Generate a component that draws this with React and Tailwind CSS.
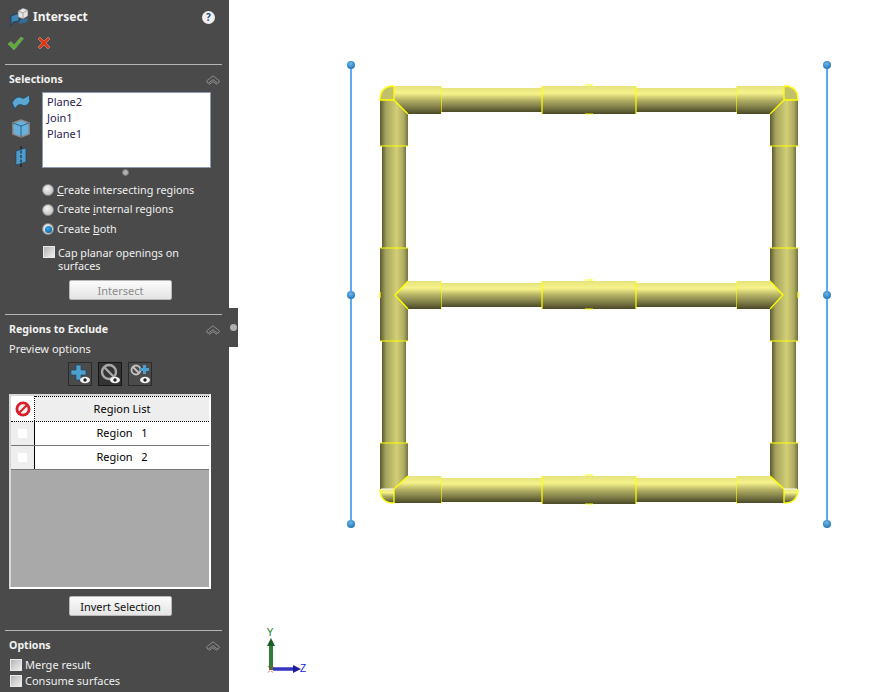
import React from 'react'

const font = { fontFamily: '"Noto Sans", sans-serif' }

function Collapse() {
    return (
        <svg width="14" height="10" viewBox="0 0 14 10" fill="none" stroke="#8e8e8e" strokeWidth="1">
            <path d="M0.5 6 L7 0.8 L13.5 6 L12 8.5 L7 4.6 L2 8.5 Z" />
            <path d="M3 9.5 L7 6.6 L11 9.5" />
        </svg>
    )
}

function SectionTitle({ children }) {
    return (
        <div className="flex items-center justify-between h-[16px] px-[9px] text-[10.6px] font-bold text-[#f2f2f2]">
            <span>{children}</span>
            <Collapse />
        </div>
    )
}

function Divider() {
    return <div className="ml-[5px] w-[217px] h-px bg-[#b5b5b5]"></div>
}

function Radio({ on, label }) {
    return (
        <div className="flex items-center h-[14px] text-[10.8px] text-[#efefef]">
            <span className="w-[12px] h-[12px] ml-[42px] mr-[3px] rounded-full border border-[#8a8a8a] bg-[radial-gradient(circle_at_40%_35%,#f4f4f4,#b4b4b4)] flex items-center justify-center">
                {on && <span className="w-[7px] h-[7px] rounded-full bg-[radial-gradient(circle_at_40%_35%,#35a8e8,#0a4f8c)]"></span>}
            </span>
            <span className="whitespace-pre">{label}</span>
        </div>
    )
}

function Check() {
    return <span className="block shrink-0 w-[12px] h-[12px] border border-[#e8e8e8] bg-gradient-to-br from-[#b5b5b5] to-[#efefef]"></span>
}

function Button({ children, disabled }) {
    return (
        <button type="button" className={`block w-[103px] h-[20px] ml-[69px] rounded-[2px] border border-[#b8b8b8] text-[11px] leading-none bg-gradient-to-b from-[#fbfbfb] to-[#e4e4e4] ${disabled ? 'text-[#8a8a8a]' : 'text-[#111]'}`}>
            {children}
        </button>
    )
}

function PreviewBtn({ active, children }) {
    return (
        <span className={`flex items-center justify-center w-[24px] h-[24px] border ${active ? 'bg-[#333] border-[#161616]' : 'bg-[#4b4b4b] border-[#2b2b2b]'}`}>
            <svg width="22" height="22" viewBox="0 0 22 22">{children}</svg>
        </span>
    )
}

function Eye() {
    return (
        <g>
            <ellipse cx="16" cy="17" rx="5" ry="3.2" fill="#f2f2f2" />
            <circle cx="16" cy="17" r="1.7" fill="#222" />
        </g>
    )
}

function RegionRow({ n }) {
    return (
        <div className="flex h-[24px] border-b border-[#777] bg-white">
            <span className="flex items-center justify-center w-[24px] bg-[#eeeeee] border-r border-black">
                <span className="w-[9px] h-[9px] bg-white"></span>
            </span>
            <span className="flex-1 text-center text-[11px] leading-[21px] text-black whitespace-pre">Region   {n}</span>
        </div>
    )
}

function Sidebar() {
    return (
        <div className="w-[229px] h-[692px] shrink-0 overflow-hidden bg-[#4a4a4a]">
            <div className="h-[64px]">
                <div className="flex items-center h-[33px] pl-[10px] pt-[1px]">
                    <svg width="20" height="20" viewBox="0 0 20 20">
                        <path d="M1 9 L9 6 L9 14 L3 15 L1 19 Z" fill="#3d86b8" stroke="#123a58" strokeWidth="0.8" />
                        <path d="M8 4 L13 1 L18 3 L18 9 L13 12 L8 10 Z" fill="#e6e6e6" stroke="#666" strokeWidth="0.7" />
                        <path d="M8 4 L13 6 L18 3 M13 6 L13 12" fill="none" stroke="#888" strokeWidth="0.7" />
                        <path d="M10 13 L18 11 L17 15 L9 17 Z" fill="#2e6f9e" />
                    </svg>
                    <span className="ml-[3px] text-[12px] font-bold text-[#f4f4f4]">Intersect</span>
                    <span className="ml-[114px] flex items-center justify-center w-[13px] h-[13px] rounded-full bg-[#f0f0f0] text-[10px] font-bold leading-none text-[#1d4e80]">?</span>
                </div>
                <div className="flex items-center pl-[7px] gap-[13px] h-[20px]">
                    <svg width="17" height="15" viewBox="0 0 17 15">
                        <path d="M1 8 L4 5.5 L7 9 L14 1 L16.5 2.5 L7 14 Z" fill="#58b030" stroke="#9a9a9a" strokeWidth="0.6" />
                    </svg>
                    <svg width="14" height="14" viewBox="0 0 14 14">
                        <path d="M1 3 L3 1 L7 5 L11 1 L13 3 L9 7 L13 11 L11 13 L7 9 L3 13 L1 11 L5 7 Z" fill="#e8330f" stroke="#a8a8a8" strokeWidth="0.6" />
                    </svg>
                </div>
            </div>
            <Divider />

            <div className="h-[249px]">
                <div className="pt-[7px]"><SectionTitle>Selections</SectionTitle></div>
                <div className="flex mt-[4px]">
                    <div className="flex flex-col items-center w-[42px] pt-[1px] gap-[7px]">
                        <svg width="20" height="18" viewBox="0 0 20 18">
                            <path d="M1 10 C4 4 8 3 11 5 C13 6 15 4 18 2 L19 8 C17 12 14 14 11 12 C8 11 6 12 4 16 Z" fill="#5aa7d4" stroke="#1c4460" strokeWidth="0.8" />
                        </svg>
                        <svg width="20" height="21" viewBox="0 0 20 21">
                            <path d="M2 5 L10 2 L18 5 L18 16 L10 19 L2 16 Z" fill="#67b2dd" stroke="#8d8d8d" strokeWidth="1.6" />
                            <path d="M2 5 L10 8 L18 5 M10 8 L10 19" fill="none" stroke="#23506e" strokeWidth="0.8" />
                        </svg>
                        <svg width="16" height="21" viewBox="0 0 16 21">
                            <path d="M3 5 L13 2 L13 16 L3 19 Z" fill="#4f9ccb" stroke="#1c4460" strokeWidth="0.7" />
                            <path d="M8 0 L8 21" stroke="#111" strokeWidth="1" strokeDasharray="3 1.5" />
                        </svg>
                    </div>
                    <div className="w-[169px] h-[76px] bg-white border border-[#8c9ab2] pl-[4px] pt-[1px] text-[11px] leading-[16px] text-[#2a1c4e]">
                        <div>Plane2</div>
                        <div>Join1</div>
                        <div>Plane1</div>
                    </div>
                </div>
                <div className="h-[8px] pl-[122px] pt-[1px]">
                    <span className="block w-[7px] h-[7px] rounded-full bg-[#b0b0b0] border border-[#777]"></span>
                </div>
                <div className="mt-[7px] flex flex-col gap-[5.5px]">
                    <Radio label={<><u>C</u>reate intersecting regions</>} />
                    <Radio label={<>Create <u>i</u>nternal regions</>} />
                    <Radio on label={<>Create <u>b</u>oth</>} />
                </div>
                <div className="flex mt-[10px] pl-[43px] text-[10.8px] leading-[13px] text-[#efefef]">
                    <Check />
                    <span className="ml-[3px] w-[150px]">Cap planar openings on surfaces</span>
                </div>
                <div className="mt-[8px]"><Button disabled>Intersect</Button></div>
            </div>
            <Divider />

            <div className="h-[315px]">
                <div className="pt-[7px]"><SectionTitle>Regions to Exclude</SectionTitle></div>
                <div className="mt-[3px] pl-[9px] text-[11px] leading-[16px] text-[#efefef]">Preview options</div>
                <div className="flex gap-[6px] mt-[5px] ml-[68px]">
                    <PreviewBtn>
                        <path d="M7 2 H12 V7 H17 V12 H12 V17 H7 V12 H2 V7 H7 Z" fill="#4ba0d0" stroke="#17425f" strokeWidth="0.6" />
                        <Eye />
                    </PreviewBtn>
                    <PreviewBtn active>
                        <circle cx="10" cy="9" r="7" fill="none" stroke="#a8a8a8" strokeWidth="2.4" />
                        <path d="M5 4 L15 14" stroke="#a8a8a8" strokeWidth="2.4" />
                        <Eye />
                    </PreviewBtn>
                    <PreviewBtn>
                        <circle cx="7" cy="7" r="4.5" fill="none" stroke="#c4c4c4" strokeWidth="1.8" />
                        <path d="M4 4 L10 10" stroke="#c4c4c4" strokeWidth="1.8" />
                        <path d="M14 2 H17 V5 H20 V8 H17 V11 H14 V8 H11 V5 H14 Z" fill="#4ba0d0" />
                        <Eye />
                    </PreviewBtn>
                </div>
                <div className="w-[202px] h-[195px] mt-[8px] ml-[9px] border-2 border-[#d8d8d8] border-b-white border-r-white bg-[#a9a9a9]">
                    <div className="flex h-[26px] bg-[#eeeeee] border-b border-dotted border-black">
                        <span className="flex items-center justify-center w-[24px] bg-white border-r border-dotted border-black">
                            <svg width="16" height="16" viewBox="0 0 16 16">
                                <circle cx="8" cy="8" r="7.5" fill="#d9202a" />
                                <circle cx="8" cy="8" r="4.7" fill="#f4f4f4" />
                                <path d="M3.5 11 L11 3.5 L12.5 5 L5 12.5 Z" fill="#d9202a" />
                            </svg>
                        </span>
                        <span className="flex-1 text-center text-[11px] leading-[23px] text-black border-t border-dotted border-black">Region List</span>
                    </div>
                    <RegionRow n="1" />
                    <RegionRow n="2" />
                </div>
                <div className="mt-[7px]"><Button>Invert Selection</Button></div>
            </div>
            <Divider />

            <div className="pt-[7px]"><SectionTitle>Options</SectionTitle></div>
            <div className="mt-[4px] pl-[10px] flex flex-col gap-[3px] text-[11px] leading-[13px] text-[#efefef]">
                <div className="flex items-center"><Check /><span className="ml-[3px]">Merge result</span></div>
                <div className="flex items-center"><Check /><span className="ml-[3px]">Consume surfaces</span></div>
            </div>
        </div>
    )
}

const Y = '#ffff00'

function HPipe({ x, y, w }) {
    return <rect x={x} y={y} width={w} height={24} fill="url(#h)" />
}

function VPipe({ x, y, h }) {
    return <rect x={x} y={y} width={24} height={h} fill="url(#v)" />
}

// one horizontal run, thin pipe and the middle sleeve
function Run({ y }) {
    return (
        <g>
            <HPipe x={441} y={y} w={296} />
            <rect x={542} y={y - 2} width={94} height={28} fill="url(#h)" />
            <path d={`M542 ${y - 2} V${y + 26} M636 ${y - 2} V${y + 26} M441 ${y - 2} V${y + 26} M737 ${y - 2} V${y + 26}`} stroke={Y} strokeWidth="1.2" />
            <path d={`M585 ${y - 3} H593 M585 ${y + 26} H593`} stroke={Y} strokeWidth="1" />
        </g>
    )
}

function Frame() {
    return (
        <svg width="661" height="692" viewBox="229 0 661 692" className="block">
            <defs>
                <linearGradient id="h" x1="0" y1="0" x2="0" y2="1">
                    <stop offset="0" stopColor="#e6e37e" />
                    <stop offset="0.25" stopColor="#f6f38b" />
                    <stop offset="0.5" stopColor="#b5b265" />
                    <stop offset="0.75" stopColor="#82804a" />
                    <stop offset="1" stopColor="#4a4927" />
                </linearGradient>
                <linearGradient id="v" x1="0" y1="0" x2="1" y2="0">
                    <stop offset="0" stopColor="#5a5a30" />
                    <stop offset="0.2" stopColor="#a5a35e" />
                    <stop offset="0.6" stopColor="#d2cf76" />
                    <stop offset="0.85" stopColor="#aeac62" />
                    <stop offset="1" stopColor="#73723f" />
                </linearGradient>
                <radialGradient id="dot" cx="0.45" cy="0.35" r="0.7">
                    <stop offset="0" stopColor="#6db9ee" />
                    <stop offset="1" stopColor="#1f6fb0" />
                </radialGradient>
            </defs>

            <path d="M351 65 V524 M827 65 V524" stroke="#5eaaf5" strokeWidth="2" />
            {[351, 827].map((x) =>
                [65, 295, 524].map((y) => <circle key={x + '-' + y} cx={x} cy={y} r="4" fill="url(#dot)" />)
            )}

            <VPipe x={382} y={146} h={297} />
            <VPipe x={772} y={146} h={297} />
            <Run y={88} />
            <Run y={283} />
            <Run y={478} />

            {/* vertical sleeves */}
            <path d="M380 100 L394 100 L408 114 V146 H380 Z" fill="url(#v)" />
            <path d="M798 100 L784 100 L770 114 V146 H798 Z" fill="url(#v)" />
            <rect x={380} y={248} width={28} height={93} fill="url(#v)" />
            <rect x={770} y={248} width={28} height={93} fill="url(#v)" />
            <path d="M380 443 H408 V476 L394 489 H380 Z" fill="url(#v)" />
            <path d="M798 443 H770 V476 L784 489 H798 Z" fill="url(#v)" />
            <path d="M380 146 H408 M770 146 H798 M380 248 H408 M770 248 H798 M380 341 H408 M770 341 H798 M380 443 H408 M770 443 H798" stroke={Y} strokeWidth="1.2" />

            {/* horizontal sleeves */}
            <path d="M394 86 H441 V114 H408 L394 100 Z" fill="url(#h)" />
            <path d="M784 86 H737 V114 H770 L784 100 Z" fill="url(#h)" />
            <path d="M395 295 L408 281 H441 V309 H408 Z" fill="url(#h)" />
            <path d="M783 295 L770 281 H737 V309 H770 Z" fill="url(#h)" />
            <path d="M394 489 L408 476 H441 V503 H394 Z" fill="url(#h)" />
            <path d="M784 489 L770 476 H737 V503 H784 Z" fill="url(#h)" />

            {/* corner caps */}
            <path d="M380 100 Q380 86 394 86 V100 Z" fill="#c3c06c" />
            <path d="M798 100 Q798 86 784 86 V100 Z" fill="#c3c06c" />
            <path d="M380 489 Q380 503 394 503 V489 Z" fill="url(#h)" />
            <path d="M798 489 Q798 503 784 503 V489 Z" fill="url(#h)" />

            <g fill="none" stroke={Y} strokeWidth="1.3">
                <path d="M380 100 Q380 86 394 86 M380 100 H394 V86 M394 100 L408 114" />
                <path d="M798 100 Q798 86 784 86 M798 100 H784 V86 M784 100 L770 114" />
                <path d="M408 281 L395 295 L408 309 M770 281 L783 295 L770 309" />
                <path d="M380 489 Q380 503 394 503 M394 489 V503 M394 489 L408 476" />
                <path d="M798 489 Q798 503 784 503 M784 489 V503 M784 489 L770 476" />
                <path d="M380 292 V298 M798 292 V298" />
            </g>
            <path d="M381 489 H394 M784 489 H797" stroke="#ffffff" strokeWidth="1" />

            {/* triad */}
            <path d="M271 670 V642" stroke="#2f7d3a" strokeWidth="4" />
            <path d="M271 638 L275 646 H267 Z" fill="#1c5e27" />
            <path d="M273 669 H295" stroke="#3535c0" strokeWidth="3.5" />
            <path d="M301 669 L293 665 V673 Z" fill="#1f1f9a" />
            <path d="M268 666 L273 673 M273 666 L268 673" stroke="#ff2020" strokeWidth="0.8" strokeDasharray="2 1" />
            <text x="270" y="636" textAnchor="middle" fontSize="10" fontFamily="Liberation Sans" fill="#0d7a20">Y</text>
            <text x="303" y="672" textAnchor="middle" fontSize="10" fontFamily="Liberation Sans" fill="#1a1ae0">Z</text>
        </svg>
    )
}

export default function App() {
    return (
        <div className="relative flex w-[890px] h-[692px] overflow-hidden bg-white" style={font}>
            <Sidebar />
            <Frame />
            <div className="absolute left-[229px] top-[308px] flex items-center justify-center w-[9px] h-[39px] bg-[#4a4a4a]">
                <span className="block w-[7px] h-[7px] rounded-full bg-[#b0b0b0]"></span>
            </div>
        </div>
    )
}
